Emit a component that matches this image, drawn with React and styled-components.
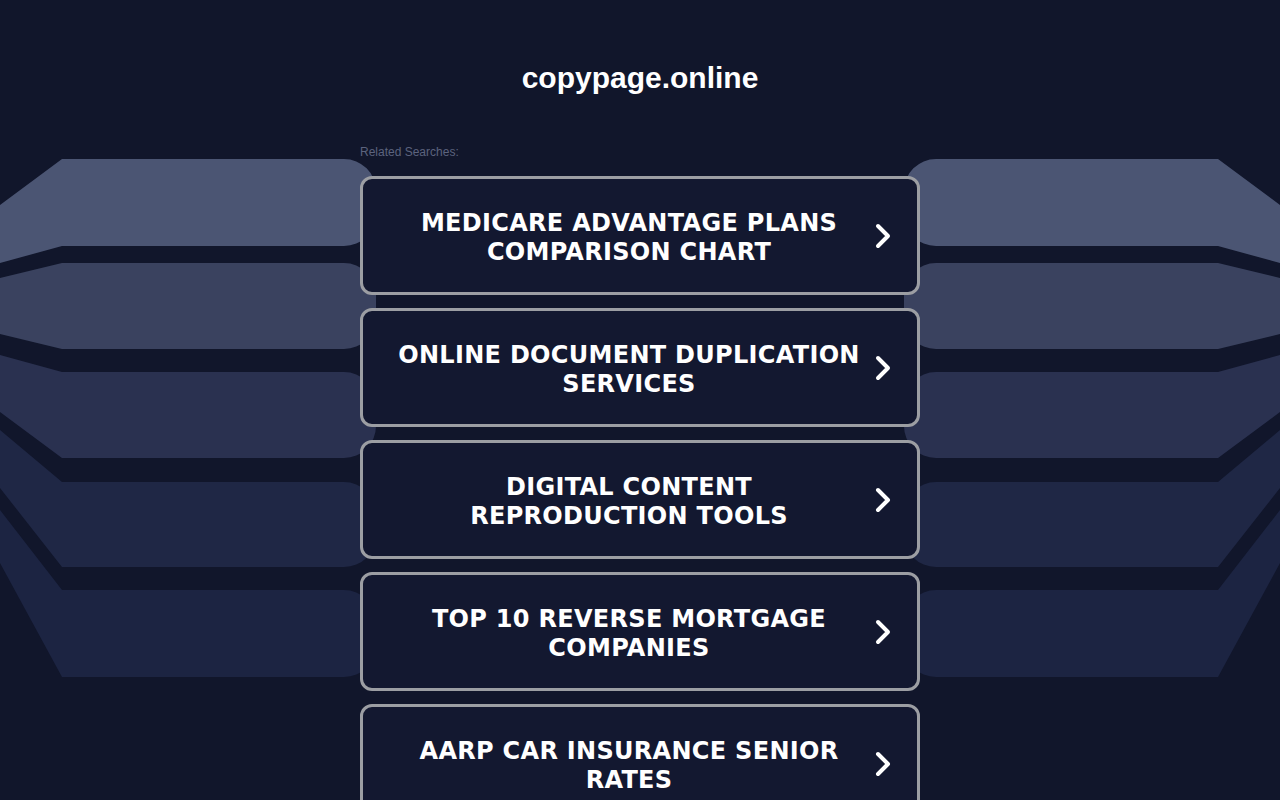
import React from "react";
import styled, { createGlobalStyle } from "styled-components";

const GlobalStyle = createGlobalStyle`
  html, body {
    margin: 0;
    padding: 0;
    background: #11162b;
  }
  * {
    box-sizing: border-box;
  }
`;

const Page = styled.div`
  position: relative;
  min-height: 100vh;
  overflow: hidden;
  background: #11162b;
`;

const Backdrop = styled.svg`
  position: absolute;
  top: 0;
  left: 0;
  width: 1280px;
  height: 800px;
  pointer-events: none;
`;

const Column = styled.main`
  position: relative;
  width: 560px;
  margin: 0 auto;
  padding-top: 60px;
  display: flex;
  flex-direction: column;
`;

const Title = styled.h1`
  margin: 0;
  font-family: "Liberation Sans", Arial, sans-serif;
  font-weight: 700;
  font-size: 30px;
  line-height: 36px;
  color: #ffffff;
  text-align: center;
`;

const Label = styled.div`
  margin-top: 49px;
  font-family: "Liberation Sans", Arial, sans-serif;
  font-size: 12px;
  line-height: 14px;
  color: #5c637e;
`;

const List = styled.div`
  margin-top: 17px;
  display: flex;
  flex-direction: column;
  gap: 13px;
`;

const SearchLink = styled.a`
  display: flex;
  align-items: center;
  height: 119px;
  padding: 0 26px 0 20px;
  border: 3px solid #9c9ea3;
  border-radius: 12px;
  background: #131830;
  text-decoration: none;
  cursor: pointer;
`;

const LinkText = styled.span`
  flex: 1;
  display: flex;
  justify-content: center;
  padding-top: 4px;
  text-align: center;
  font-family: "DejaVu Sans", Verdana, sans-serif;
  font-weight: 700;
  font-size: 24px;
  line-height: 29px;
  letter-spacing: 0.3px;
  color: #ffffff;
  text-transform: uppercase;

  span {
    max-width: 466px;
  }
`;

const Chevron = styled.svg`
  flex: none;
  width: 16px;
  height: 26px;
`;

const searches = [
  "Medicare Advantage Plans Comparison Chart",
  "Online Document Duplication Services",
  "Digital Content Reproduction Tools",
  "Top 10 Reverse Mortgage Companies",
  "AARP Car Insurance Senior Rates",
];

// bands of the side decoration: flat top/bottom, and where the edges meet x=0
const bands = [
  { top: 159, bottom: 246, leftTop: 205, leftBottom: 263, fill: "#4b5573" },
  { top: 263, bottom: 349, leftTop: 278, leftBottom: 334, fill: "#3a425f" },
  { top: 372, bottom: 458, leftTop: 355, leftBottom: 412, fill: "#2a3150" },
  { top: 482, bottom: 567, leftTop: 430, leftBottom: 488, fill: "#1f2745" },
  { top: 590, bottom: 677, leftTop: 510, leftBottom: 563, fill: "#1c2442" },
];

const bandPath = (b, mirror) => {
  const x = (v) => (mirror ? 1280 - v : v);
  const end = 376;
  const r = 32;
  const sweep = mirror ? 0 : 1;
  return [
    `M ${x(0)} ${b.leftTop}`,
    `L ${x(62)} ${b.top}`,
    `L ${x(end - r)} ${b.top}`,
    `A ${r} ${r} 0 0 ${sweep} ${x(end)} ${b.top + r}`,
    `L ${x(end)} ${b.bottom - r}`,
    `A ${r} ${r} 0 0 ${sweep} ${x(end - r)} ${b.bottom}`,
    `L ${x(62)} ${b.bottom}`,
    `L ${x(0)} ${b.leftBottom}`,
    "Z",
  ].join(" ");
};

const App = () => {
  return (
    <Page>
      <GlobalStyle />
      <Backdrop viewBox="0 0 1280 800">
        {bands.map((b, i) => (
          <g key={i} fill={b.fill}>
            <path d={bandPath(b, false)} />
            <path d={bandPath(b, true)} />
          </g>
        ))}
      </Backdrop>
      <Column>
        <Title>copypage.online</Title>
        <Label>Related Searches:</Label>
        <List>
          {searches.map((s) => (
            <SearchLink key={s} href="#">
              <LinkText>
                <span>{s}</span>
              </LinkText>
              <Chevron viewBox="0 0 16 26">
                <polyline
                  points="3,3 13,13 3,23"
                  fill="none"
                  stroke="#ffffff"
                  strokeWidth="4"
                  strokeLinecap="round"
                  strokeLinejoin="round"
                />
              </Chevron>
            </SearchLink>
          ))}
        </List>
      </Column>
    </Page>
  );
};

export default App;
